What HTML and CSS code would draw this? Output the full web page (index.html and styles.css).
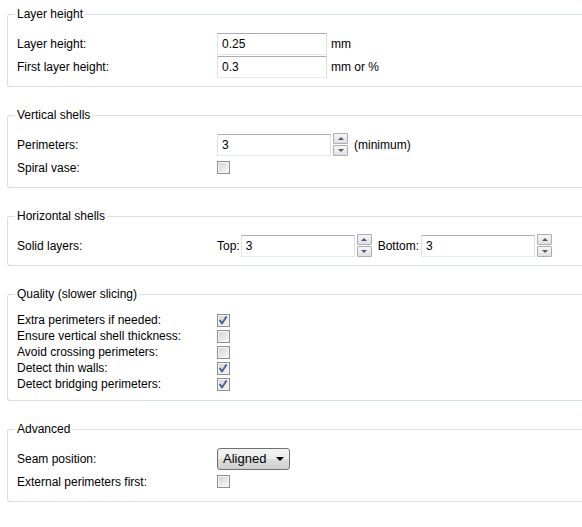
FILE: index.html
```html
<!DOCTYPE html>
<html lang="en">
  <head>
    <meta charset="UTF-8" />
    <meta name="viewport" content="width=device-width, initial-scale=1.0" />
    <title>Layers and perimeters</title>
    <link rel="stylesheet" href="styles.css">
  </head>
  <body>
    <main class="opciones">
      <fieldset class="grupo">
        <legend>Layer height</legend>
        <div class="fila">
          <label>Layer height:</label>
          <input class="texto" type="text" value="0.25">
          <span class="unidad">mm</span>
        </div>
        <div class="fila">
          <label>First layer height:</label>
          <input class="texto" type="text" value="0.3">
          <span class="unidad">mm or %</span>
        </div>
      </fieldset>

      <fieldset class="grupo">
        <legend>Vertical shells</legend>
        <div class="fila">
          <label>Perimeters:</label>
          <input class="texto numero" type="text" value="3">
          <span class="flechas"><span class="subir"></span><span class="bajar"></span></span>
          <span class="unidad extra">(minimum)</span>
        </div>
        <div class="fila">
          <label>Spiral vase:</label>
          <span class="casilla"></span>
        </div>
      </fieldset>

      <fieldset class="grupo">
        <legend>Horizontal shells</legend>
        <div class="fila">
          <label>Solid layers:</label>
          <span class="sub">Top:</span>
          <input class="texto numero" type="text" value="3">
          <span class="flechas"><span class="subir"></span><span class="bajar"></span></span>
          <span class="sub otro">Bottom:</span>
          <input class="texto numero" type="text" value="3">
          <span class="flechas"><span class="subir"></span><span class="bajar"></span></span>
        </div>
      </fieldset>

      <fieldset class="grupo casillas">
        <legend>Quality (slower slicing)</legend>
        <div class="fila">
          <label>Extra perimeters if needed:</label>
          <span class="casilla marcada"><svg viewBox="0 0 11 11"><path d="M1.6 5 L4 8.4 L8.6 1.4"/></svg></span>
        </div>
        <div class="fila">
          <label>Ensure vertical shell thickness:</label>
          <span class="casilla"></span>
        </div>
        <div class="fila">
          <label>Avoid crossing perimeters:</label>
          <span class="casilla"></span>
        </div>
        <div class="fila">
          <label>Detect thin walls:</label>
          <span class="casilla marcada"><svg viewBox="0 0 11 11"><path d="M1.6 5 L4 8.4 L8.6 1.4"/></svg></span>
        </div>
        <div class="fila">
          <label>Detect bridging perimeters:</label>
          <span class="casilla marcada"><svg viewBox="0 0 11 11"><path d="M1.6 5 L4 8.4 L8.6 1.4"/></svg></span>
        </div>
      </fieldset>

      <fieldset class="grupo">
        <legend>Advanced</legend>
        <div class="fila">
          <label>Seam position:</label>
          <div class="combo"><span>Aligned</span><span class="triangulo"></span></div>
        </div>
        <div class="fila">
          <label>External perimeters first:</label>
          <span class="casilla"></span>
        </div>
      </fieldset>
    </main>
  </body>
</html>
```

FILE: styles.css
```css
/* Panel de opciones: cada grupo es un fieldset con su legend
   y cada opción una fila en flex (etiqueta + control). */
body {
  margin: 0;
  padding-top: 7px;
  background: white;
  font-family: "Liberation Sans", Arial, sans-serif;
  font-size: 12px;
  color: black;
}

.opciones {
  display: flex;
  flex-direction: column;
  gap: 21px;
}

.grupo {
  margin: 0 0 0 7px;
  padding: 11px 0 8px 7px;
  border: 1px solid #d5dfe5;
  border-right: none;
  border-radius: 3px 0 0 3px;
  min-width: 0;
}
.grupo legend {
  padding: 0 2px;
  line-height: 14px;
}

.fila {
  display: flex;
  align-items: center;
  height: 23px;
  padding-left: 2px;
}
/* En el grupo de calidad las casillas van más juntas */
.casillas .fila {
  height: 16px;
}
.fila label {
  flex: 0 0 200px;
}

.texto {
  box-sizing: border-box;
  width: 110px;
  height: 22px;
  margin: 0;
  padding: 0 0 0 4px;
  border: 1px solid;
  border-color: #abadb3 #dbdfe6 #e3e9ef #e2e3ea;
  font: inherit;
  color: black;
  outline: none;
}
.texto.numero {
  width: 114px;
}
.sub + .texto {
  margin-left: 1px;
}

.unidad {
  margin-left: 4px;
}
.unidad.extra {
  margin-left: 6px;
}

/* Botones de subir / bajar al lado de los campos numéricos */
.flechas {
  display: flex;
  flex-direction: column;
  gap: 1px;
  width: 15px;
  height: 23px;
  margin-left: 2px;
}
.flechas span {
  flex: 1;
  display: flex;
  justify-content: center;
  align-items: center;
  border: 1px solid #adadad;
  border-radius: 1px;
  background: linear-gradient(#f6f6f6, #e0e0e0);
}
.flechas span::after {
  content: "";
  width: 0;
  height: 0;
  border-left: 3px solid transparent;
  border-right: 3px solid transparent;
}
.flechas .subir::after {
  border-bottom: 3px solid #4a5a80;
}
.flechas .bajar::after {
  border-top: 3px solid #4a5a80;
}

.sub.otro {
  margin-left: 6px;
}
.sub.otro + .texto {
  margin-left: 2px;
}

.casilla {
  box-sizing: border-box;
  width: 13px;
  height: 13px;
  border: 1px solid #8e8f8f;
  box-shadow: inset 0 0 0 1px #f4f4f4;
  background: linear-gradient(135deg, #d2d3d5, #f8f8f8);
  display: flex;
}
.casilla svg {
  width: 11px;
  height: 11px;
}
.casilla path {
  fill: none;
  stroke: #4b5d96;
  stroke-width: 1.9;
}

/* Desplegable estilo Windows 7 */
.combo {
  box-sizing: border-box;
  width: 73px;
  height: 22px;
  display: flex;
  align-items: center;
  justify-content: space-between;
  padding: 0 5px 0 5px;
  border: 1px solid #707070;
  border-radius: 3px;
  background: linear-gradient(#f2f2f2 0%, #ebebeb 50%, #dddddd 51%, #cfcfcf 100%);
  font-size: 13px;
}
.combo .triangulo {
  width: 0;
  height: 0;
  border-left: 4px solid transparent;
  border-right: 4px solid transparent;
  border-top: 4px solid black;
}
```
